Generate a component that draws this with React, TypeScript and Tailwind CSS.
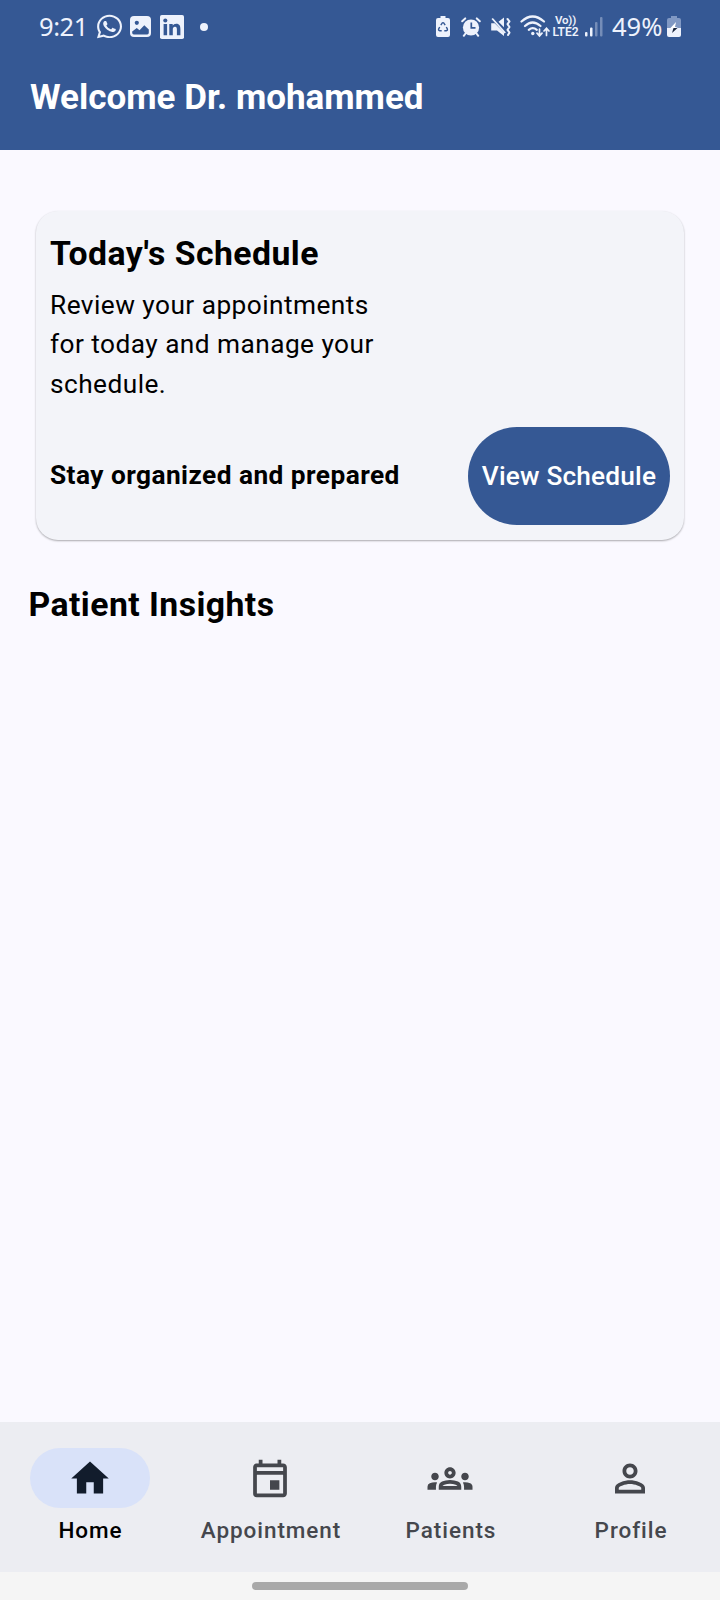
import type { ReactNode } from "react";
import { FaWhatsapp } from "react-icons/fa";

function NavIcon({ path }: { path: string }) {
  return (
    <svg viewBox="-0.267 -0.533 24.533 24.533" className="h-[46px] w-[46px]" fill="currentColor">
      <path d={path} />
    </svg>
  );
}

const HOME = "M10 20v-6h4v6h5v-8h3L12 3 2 12h3v8z";
const EVENT =
  "M19 4h-1V2h-2v2H8V2H6v2H5c-1.11 0-1.99.9-1.99 2L3 20a2 2 0 0 0 2 2h14c1.1 0 2-.9 2-2V6c0-1.1-.9-2-2-2zm0 16H5V10h14v10zm0-12H5V6h14v2zm-7 5h5v5h-5z";
const GROUPS =
  "M4 13c1.1 0 2-.9 2-2s-.9-2-2-2-2 .9-2 2 .9 2 2 2zm1.13 1.1c-.37-.06-.74-.1-1.13-.1-.99 0-1.93.21-2.78.58A2.01 2.01 0 0 0 0 16.43V18h4.5v-1.61c0-.83.23-1.61.63-2.29zM20 13c1.1 0 2-.9 2-2s-.9-2-2-2-2 .9-2 2 .9 2 2 2zm4 3.43c0-.81-.48-1.53-1.22-1.85A6.95 6.95 0 0 0 20 14c-.39 0-.76.04-1.13.1.4.68.63 1.46.63 2.29V18H24v-1.57zM16.24 13.65c-1.17-.52-2.61-.9-4.24-.9s-3.07.39-4.24.9A2.988 2.988 0 0 0 6 16.39V18h12v-1.61c0-1.18-.68-2.26-1.76-2.74zM8.07 16c.09-.23.13-.39.91-.69.97-.38 1.99-.56 3.02-.56s2.05.18 3.02.56c.77.3.81.46.91.69H8.07zM12 8c.55 0 1 .45 1 1s-.45 1-1 1-1-.45-1-1 .45-1 1-1m0-2c-1.66 0-3 1.34-3 3s1.34 3 3 3 3-1.34 3-3-1.34-3-3-3z";
const PERSON =
  "M12 6c1.1 0 2 .9 2 2s-.9 2-2 2-2-.9-2-2 .9-2 2-2m0 9c2.7 0 5.8 1.29 6 2v1H6v-.99c.2-.72 3.3-2.01 6-2.01m0-11C9.79 4 8 5.79 8 8s1.79 4 4 4 4-1.79 4-4-1.79-4-4-4zm0 9c-2.67 0-8 1.34-8 4v3h16v-3c0-2.66-5.33-4-8-4z";

function StatusBar() {
  return (
    <div className="flex h-[53px] items-center pl-[39px] font-['Noto_Sans',sans-serif] text-[#eef2fc]">
      <span className="w-[58px] text-[25.5px] leading-none tracking-[-0.4px]">9:21</span>
      <FaWhatsapp className="h-[27px] w-[25px]" preserveAspectRatio="none" />

      <svg viewBox="0 0 21 21" className="ml-2 h-[21px] w-[21px]">
        <rect width="21" height="21" rx="4" fill="currentColor" />
        <circle cx="6.8" cy="6.8" r="2.1" fill="#355894" />
        <path d="M2.2 15.5 6.8 12l2.7 2.2 4.8-5 4.5 4.4v3.2a1.6 1.6 0 0 1-1.6 1.6H3.8a1.6 1.6 0 0 1-1.6-1.6z" fill="#355894" />
      </svg>

      <svg viewBox="0 0 24 24" className="ml-[9px] h-6 w-6">
        <rect width="24" height="24" rx="1.8" fill="currentColor" />
        <path d="M3.6 9h3.5v11.3H3.6zM9.3 9h3.4v1.6c.6-1.1 1.8-1.9 3.5-1.9 3.5 0 4.2 2.3 4.2 5.3v6.3h-3.5v-5.6c0-1.5-.1-3-1.9-3s-2.2 1.4-2.2 2.9v5.7H9.3z" fill="#355894" />
        <circle cx="5.3" cy="5.5" r="2.05" fill="#355894" />
      </svg>
      <div className="ml-4 h-2 w-2 rounded-full bg-[#eef2fc]" />

      <svg viewBox="0 0 14 21" className="ml-[228px] h-[21px] w-[14px]">
        <path d="M4.5 0h5v2H12a2 2 0 0 1 2 2v15a2 2 0 0 1-2 2H2a2 2 0 0 1-2-2V4a2 2 0 0 1 2-2h2.5z" fill="currentColor" />
        <path d="M4.8 9.2 6 7.3Q7 6 8 7.3l1.2 1.9M10.3 11l1 1.9q.6 1.6-1 1.8H8.3M5.7 14.7h-2q-1.6-.2-1-1.8l1-1.9" fill="none" stroke="#355894" strokeWidth="1.4" />
      </svg>

      <svg viewBox="0 0 20 20" className="ml-[11px] h-5 w-5">
        <circle cx="10" cy="10.5" r="8.1" fill="currentColor" />
        <path d="m1.2 4.2 3-2.8M18.8 4.2l-3-2.8M4.5 16.5l-1.7 2.3M15.5 16.5l1.7 2.3" stroke="currentColor" strokeWidth="2" strokeLinecap="round" />
        <path d="M10.3 5.5v5.3h4.2" fill="none" stroke="#355894" strokeWidth="1.7" />
      </svg>

      <svg viewBox="0 0 20 20" className="ml-[10px] h-5 w-5" fill="none" stroke="currentColor">
        <path d="M.2 6.2h3.5L13 15.5V19L6 13.5H.2zM7.5 4.8 13 .5v9.8z" fill="currentColor" stroke="none" />
        <path d="m1.2 1.5 13 14.5" strokeWidth="1.8" />
        <path d="m16.5 2 2 2.3-2 2.8 2 2.9-2 2.9 2 2.7-1.5 2.4" strokeWidth="2" strokeLinejoin="round" strokeLinecap="round" />
      </svg>

      <svg viewBox="0 0 30 23" className="ml-[9px] h-[23px] w-[30px]" fill="none" stroke="currentColor" strokeLinecap="round">
        <path d="M1.5 6.5Q12.5-3.5 24 6.5M5 11Q12.5 4 20.5 11M8.8 14.8q4-3.3 8 0" strokeWidth="2.2" />
        <circle cx="12.8" cy="18.5" r="1.7" fill="currentColor" stroke="none" />
        <path d="M19.5 14v6.5m-2.5-2.3 2.5 2.7 2.5-2.7M26.5 20.5v-7m-2.5 2.5 2.5-2.7 2.5 2.7" strokeWidth="1.7" />
      </svg>

      <div className="ml-[1px] flex w-[29px] flex-col items-center font-[Roboto,sans-serif] font-semibold">
        <span className="text-[11.5px] leading-[11px] tracking-[-0.2px]">Vo))</span>
        <span className="text-[12px] leading-[12px]">LTE2</span>
      </div>

      <svg viewBox="0 0 18 20" className="ml-[5px] h-5 w-[18px]" fill="currentColor">
        <rect x="0" y="15" width="2.5" height="4.5" rx="1" />
        <rect x="5" y="10.5" width="2.5" height="9" rx="1" />
        <rect x="10" y="5" width="2.5" height="14.5" rx="1" opacity=".35" />
        <rect x="15" y="0" width="2.5" height="19.5" rx="1" opacity=".35" />
      </svg>
      <span className="ml-[9px] w-[55px] text-[25.5px] leading-none">49%</span>
      <svg viewBox="0 0 14 21" className="h-[21px] w-[14px]">
        <path d="M4 0h6v2h2a2 2 0 0 1 2 2v8H0V4a2 2 0 0 1 2-2h2z" fill="#8098c3" />
        <path d="M0 12h14v7a2 2 0 0 1-2 2H2a2 2 0 0 1-2-2z" fill="currentColor" />
        <path d="M9 6 3 12.5h4L11 11H8z" fill="#fff" />
        <path d="M6.5 12 5 17l5.5-5z" fill="#17233b" />
      </svg>
    </div>
  );
}

function NavItem({ icon, label, active = false }: { icon: ReactNode; label: string; active?: boolean }) {
  return (
    <button className="flex w-[180px] flex-col items-center pt-[26px]">
      <span
        className={
          active
            ? "flex h-[60px] w-[120px] items-center justify-center rounded-full bg-[#d9e2f9] text-[#121c2c]"
            : "flex h-[60px] w-[120px] items-center justify-center text-[#45474d]"
        }
      >
        {icon}
      </span>
      <span
        className={
          active
            ? "mt-[7px] pl-px text-[22.5px] leading-[30px] font-medium tracking-[0.94px] text-black"
            : "mt-[7px] pl-[2px] text-[22.5px] leading-[30px] font-medium tracking-[0.94px] text-[#45474d]"
        }
      >
        {label}
      </span>
    </button>
  );
}

export default function App() {
  return (
    <div className="flex h-[1600px] w-[720px] flex-col overflow-hidden bg-[#faf9ff] font-[Roboto,sans-serif] text-black">
      <header className="h-[150px] bg-[#355894]">
        <StatusBar />
        <h1 className="pt-[23px] pl-[30px] text-[35px] leading-[44px] font-bold whitespace-nowrap text-white">
          Welcome Dr. mohammed
        </h1>
      </header>

      <main className="flex-1 pt-[61px]">
        <section className="mx-[36px] h-[329px] w-[648px] rounded-[22px] bg-[#f3f4f9] px-[14px] pt-[21px] shadow-[0_1px_2px_rgba(0,0,0,0.32)]">
          <h2 className="text-[33.75px] leading-[44px] font-bold tracking-[0.47px] whitespace-nowrap">
            Today's Schedule
          </h2>
          <p className="mt-[10px] w-[350px] text-[26.25px] leading-[39.4px] tracking-[0.45px]">
            Review your appointments for today and manage your schedule.
          </p>
          <div className="mt-[23px] flex items-center justify-between">
            <p className="pb-[2px] text-[26.25px] font-bold tracking-[0.45px] whitespace-nowrap">
              Stay organized and prepared
            </p>
            <button className="h-[98px] w-[202px] rounded-full bg-[#355894] text-[26.25px] font-medium tracking-[0.18px] whitespace-nowrap text-white">
              View Schedule
            </button>
          </div>
        </section>
        <h2 className="mt-[43px] pl-[28.5px] text-[33.75px] leading-[44px] font-bold tracking-[0.44px]">
          Patient Insights
        </h2>
      </main>

      <nav className="flex h-[150px] bg-[#ecedf2]">
        <NavItem icon={<NavIcon path={HOME} />} label="Home" active />
        <NavItem icon={<NavIcon path={EVENT} />} label="Appointment" />
        <NavItem icon={<NavIcon path={GROUPS} />} label="Patients" />
        <NavItem icon={<NavIcon path={PERSON} />} label="Profile" />
      </nav>
      <div className="flex h-[28px] items-center justify-center bg-[#f5f5f5]">
        <div className="h-2 w-[216px] rounded-full bg-[#a9a9a9]" />
      </div>
    </div>
  );
}
